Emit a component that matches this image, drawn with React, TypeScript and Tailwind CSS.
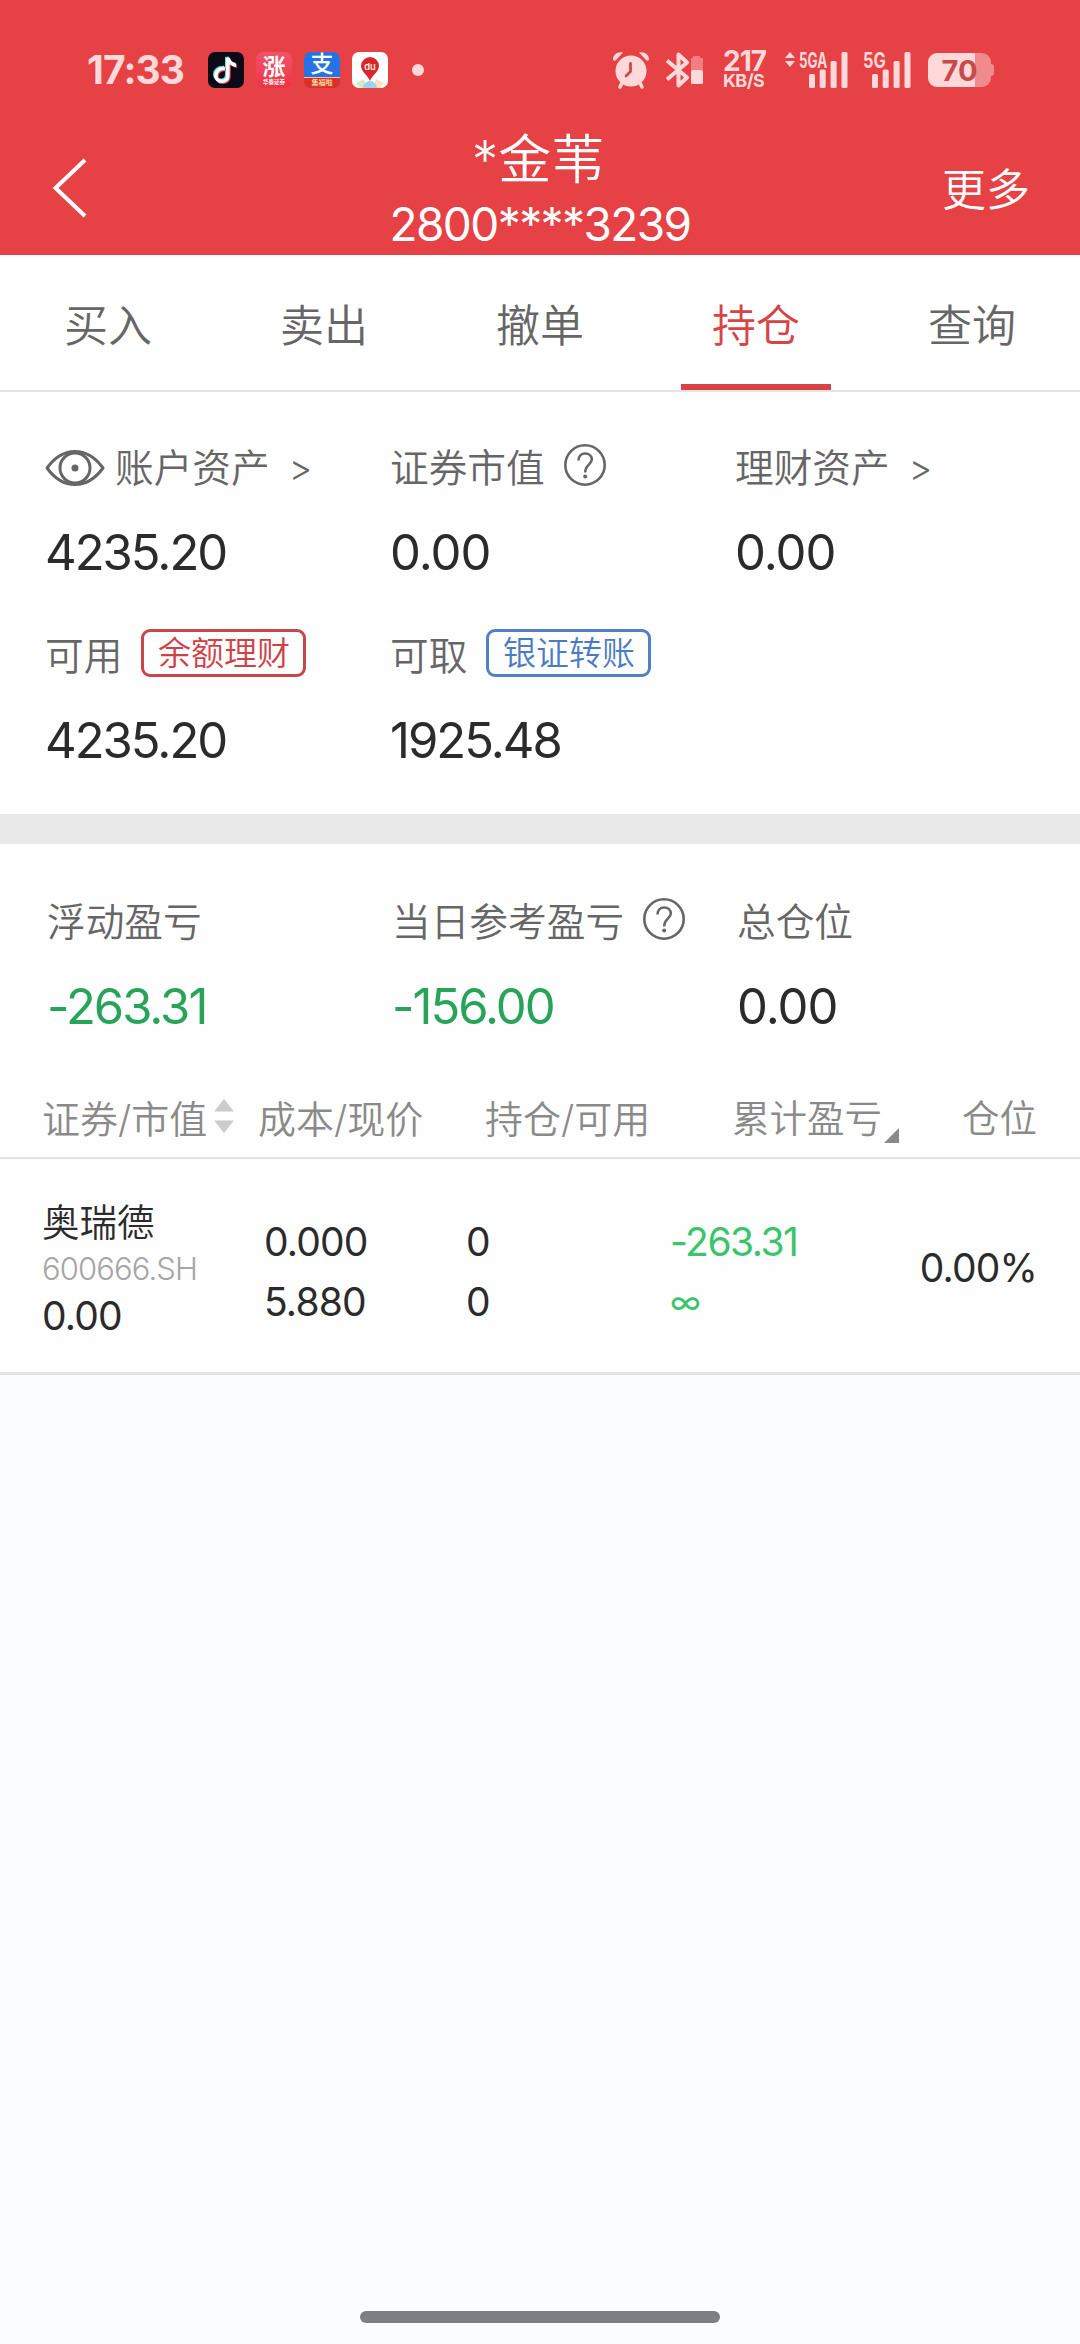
import React from "react";

interface Metric {
  label: string;
  value: string;
  tone?: "down";
  eye?: boolean;
  arrow?: boolean;
  help?: boolean;
  tag?: { text: string; color: "red" | "blue" };
}

const TABS = ["买入", "卖出", "撤单", "持仓", "查询"];
const ACTIVE_TAB = "持仓";

const ASSETS: Metric[] = [
  { label: "账户资产", value: "4235.20", eye: true, arrow: true },
  { label: "证券市值", value: "0.00", help: true },
  { label: "理财资产", value: "0.00", arrow: true },
];

const CASH: Metric[] = [
  { label: "可用", value: "4235.20", tag: { text: "余额理财", color: "red" } },
  { label: "可取", value: "1925.48", tag: { text: "银证转账", color: "blue" } },
];

const PROFIT: Metric[] = [
  { label: "浮动盈亏", value: "-263.31", tone: "down" },
  { label: "当日参考盈亏", value: "-156.00", tone: "down", help: true },
  { label: "总仓位", value: "0.00" },
];

const EyeIcon = () => (
  <svg className="mr-[10px] shrink-0" width="60" height="38" viewBox="0 0 60 38" fill="none" stroke="#666" strokeWidth="3">
    <path d="M2 19C10 8 19 2.500 30 2.500S50 8 58 19C50 30 41 35.500 30 35.500S10 30 2 19Z" strokeLinejoin="round" />
    <circle cx="30" cy="19" r="15" />
    <circle cx="30" cy="19" r="3.500" fill="#666" stroke="none" />
  </svg>
);

const HelpIcon = () => (
  <svg className="relative -top-[3px] ml-[19px] shrink-0" width="42" height="42" viewBox="0 0 42 42" fill="none" stroke="#666" strokeWidth="2.600">
    <circle cx="21" cy="21" r="19.700" />
    <path d="M14.500 16.500C14.500 12 17.300 9.500 21.200 9.500C25 9.500 27.800 12 27.800 15.500C27.800 20.500 21.200 20.500 21.200 28.500" />
    <circle cx="21.200" cy="32.500" r="2" fill="#666" stroke="none" />
  </svg>
);

const Bars = () => (
  <svg width="39" height="36" viewBox="0 0 39 36" fill="#ffd9d9">
    <rect x="0" y="22" width="6" height="14" rx="1.500" />
    <rect x="10.700" y="17.500" width="6" height="18.500" rx="1.500" />
    <rect x="21.600" y="9" width="6" height="27" rx="1.500" />
    <rect x="32.500" y="0" width="6" height="36" rx="1.500" />
  </svg>
);

const StatusBar = () => (
  <div className="flex h-[140px] items-center pl-[87px] text-[#ffd9d9]">
    <span className="w-[121px] pb-[2px] text-[39px] leading-none font-bold tracking-[-0.9px]">17:33</span>
    <div className="flex gap-3">
      <svg width="36" height="36" viewBox="0 0 36 36">
        <rect width="36" height="36" rx="7" fill="#0d0a18" />
        <g fill="none" strokeWidth="3.600">
          <path d="M16 15.500C10 15 6.800 18.500 6.800 22.300C6.800 25.800 9.500 28.300 13 28.300C16.500 28.300 18.800 25.800 18.800 22.800V5C20.300 9.500 22.500 11.700 27 12.200" stroke="#4fe3e0" />
          <path d="M18 17.500C12 17 8.800 20.500 8.800 24.300C8.800 27.800 11.500 30.300 15 30.300C18.500 30.300 20.800 27.800 20.800 24.800V7C22.300 11.500 24.500 13.700 29 14.200" stroke="#f0446a" />
          <path d="M17 16.500C11 16 7.800 19.500 7.800 23.300C7.800 26.800 10.500 29.300 14 29.300C17.500 29.300 19.800 26.800 19.800 23.800V6C21.300 10.500 23.500 12.700 28 13.200" stroke="#fff" />
        </g>
      </svg>
      <div className="flex h-9 w-9 flex-col items-center rounded-[7px] bg-linear-to-b from-[#f2526a] to-[#ee3146] text-white">
        <span className="mt-[3px] h-6 text-[23px] leading-[24px] font-bold">涨</span>
        <span className="text-[5.500px] leading-[7px] font-bold">华泰证券</span>
      </div>
      <div className="h-9 w-9 rounded-[7px] bg-[#2673e8] text-center text-white">
        <div className="h-[25px] text-[23px] leading-[25px] font-medium">支</div>
        <div className="h-[11px] w-full rounded-b-[7px] border-t border-[#f6c890] bg-[#dd2f24] text-[7px] leading-[10px] font-bold text-[#ffd9a0]">集福啦</div>
      </div>
      <svg width="36" height="36" viewBox="0 0 36 36">
        <rect width="36" height="36" rx="7" fill="#fff" />
        <path d="M4 31L12 27L15 36H8Z" fill="#d5e8c8" />
        <path d="M32 31L24 27L21 36H28Z" fill="#f4e6b8" />
        <path d="M11 36C12 31 15 29 18 29S24 31 25 36Z" fill="#9bd3ee" />
        <path d="M18 29C16 23 9 20 9 14A9 9 0 0 1 27 14C27 20 20 23 18 29Z" fill="#d8262c" />
        <text x="18" y="17.500" textAnchor="middle" fontSize="9.500" fontWeight="500" fill="#fff">du</text>
      </svg>
    </div>
    <span className="ml-6 h-3 w-3 rounded-full bg-[#ffd9d9]" />
    <svg className="ml-[188px]" width="38" height="38" viewBox="0 0 38 38">
      <path d="M10 32L8 36M28 32L30 36" stroke="#ffd9d9" strokeWidth="3.500" strokeLinecap="round" />
      <circle cx="19" cy="20" r="15.500" fill="#ffd9d9" />
      <path d="M1 8.500C1 4 5 .5 11 1.500L3.500 9.500C2.500 10 1 9.500 1 8.500ZM37 8.500C37 4 33 .5 27 1.500L34.500 9.500C35.500 10 37 9.500 37 8.500Z" fill="#ffd9d9" />
      <path d="M18.500 12.500V20.500L14 25" fill="none" stroke="#c9484b" strokeWidth="2.800" strokeLinecap="round" />
    </svg>
    <svg className="ml-4" width="38" height="38" viewBox="0 0 38 38">
      <path d="M1 9.500L21 26.500L12.500 34.500V3.500L21 11.500L1 28.500" fill="none" stroke="#ffd9d9" strokeWidth="4" strokeLinejoin="round" />
      <path d="M27 5H34V7H37V19H25V7H27Z" fill="#f17f80" />
      <rect x="25" y="19" width="12" height="14" rx="1.500" fill="#ffd9d9" />
    </svg>
    <div className="ml-[19px] flex w-[47px] flex-col font-bold">
      <span className="text-[28px] leading-[21px] tracking-[-1px]">217</span>
      <span className="text-[18px] leading-[17px] tracking-[-0.6px]">KB/S</span>
    </div>
    <div className="relative ml-[15px] flex h-9 w-[63px] justify-end">
      <svg className="absolute top-0 left-0" width="10" height="15" viewBox="0 0 10 15" fill="#ffd9d9">
        <path d="M5 0L10 6H0ZM5 15L0 9H10Z" />
      </svg>
      <span className="absolute top-0 left-[14px] origin-left scale-x-[0.64] text-[21px] leading-[17px] font-bold">5GA</span>
      <Bars />
    </div>
    <div className="relative ml-[15px] flex h-9 w-[48px] justify-end">
      <span className="absolute top-0 left-0 origin-left scale-x-[0.78] text-[21px] leading-[17px] font-bold">5G</span>
      <Bars />
    </div>
    <div className="ml-[17px] flex items-center">
      <div className="flex h-[34px] w-[63px] items-center justify-center rounded-[9px] bg-linear-to-r from-[#ffd9d9] from-75% to-[#f18a8b] to-75%">
        <span className="text-[29px] leading-none font-bold text-[#c9484b]">70</span>
      </div>
      <span className="h-3 w-[3px] rounded-r-sm bg-[#f18a8b]" />
    </div>
  </div>
);

const Header = () => (
  <header className="h-[255px] bg-[#e64144] text-white">
    <StatusBar />
    <div className="-mt-2 grid h-[123px] grid-cols-[200px_1fr_200px]">
      <svg className="mt-[26px] ml-[51px]" width="38" height="60" viewBox="0 0 38 60" fill="none" stroke="#fff" strokeWidth="4">
        <path d="M34 2L4.500 30L34 58" />
      </svg>
      <div className="flex flex-col items-center">
        <span className="h-[60px] pr-1 text-[53px] leading-[57px]">*金苇</span>
        <span className="text-[46px] leading-[64px] font-normal tracking-[-1.6px]">2800****3239</span>
      </div>
      <span className="pt-[25px] pr-[50px] text-right text-[44px] leading-[66px]">更多</span>
    </div>
  </header>
);

const Tabs = () => (
  <nav className="grid h-[137px] grid-cols-5 border-b-2 border-[#e3e3e3] bg-white">
    {TABS.map(tab => (
      <div
        key={tab}
        className={`flex flex-col items-center justify-between pt-[38px] text-[44px] leading-[66px] ${
          tab === ACTIVE_TAB ? "text-[#d84446]" : "text-[#666]"
        }`}
      >
        {tab}
        {tab === ACTIVE_TAB && <span className="h-[6px] w-[150px] bg-[#d84446]" />}
      </div>
    ))}
  </nav>
);

const MetricRow = ({ items }: { items: Metric[] }) => (
  <div className="grid grid-cols-[345px_345px_1fr]">
    {items.map(m => (
      <div key={m.label}>
        <div className="flex h-[58px] items-center text-[38.700px] whitespace-nowrap text-[#666]">
          {m.eye && <EyeIcon />}
          {m.label}
          {m.arrow && <span className="ml-[19px] text-[36px]">&gt;</span>}
          {m.help && <HelpIcon />}
          {m.tag && (
            <span
              className={`relative -top-[3px] ml-[19px] flex h-12 w-[165px] items-center justify-center rounded-[9px] border-3 pt-[2px] text-[33px] ${
                m.tag.color === "red" ? "border-[#c4484c] text-[#cf4146]" : "border-[#5180c4] text-[#4a7cc6]"
              }`}
            >
              {m.tag.text}
            </span>
          )}
        </div>
        <div
          className={`mt-[26px] text-[49px] leading-[60px] font-normal ${
            m.value.length > 4 ? "tracking-[-2px]" : "tracking-[-1px]"
          } ${m.tone === "down" ? "text-[#27a35a]" : "text-[#2b2b2b]"}`}
        >
          {m.value}
        </div>
      </div>
    ))}
  </div>
);

const Holdings = () => (
  <section>
    <div className="flex h-[78px] items-center border-b-2 border-[#e3e3e3] pl-[42px] text-[38px] whitespace-nowrap text-[#8a8a8a]">
      <div className="flex w-[216px] items-center">
        证券/市值
        <svg className="relative -top-[3px] ml-[7px]" width="20" height="34" viewBox="0 0 20 34" fill="#ccc">
          <path d="M10 0L20 12.500H0ZM10 34L0 21.500H20Z" />
        </svg>
      </div>
      <div className="w-[227px]">成本/现价</div>
      <div className="w-[247px]">持仓/可用</div>
      <div className="flex w-[230px] items-center text-[37.500px]">
        累计盈亏
        <svg className="mt-8 ml-[2px]" width="15" height="15" viewBox="0 0 15 15" fill="#8a8a8a">
          <path d="M15 0V15H0Z" />
        </svg>
      </div>
      <div className="text-[37.500px]">仓位</div>
    </div>
    <div className="flex h-[216px] items-center border-b-3 border-[#e3e3e3] pt-[4px] pr-[43px] pl-[42px] text-[39px] leading-[60px] font-normal tracking-[-0.8px] text-[#2b2b2b]">
      <div className="w-[222px] pt-[4px]">
        <div className="text-[37.500px] leading-[46px] font-[350] tracking-normal">奥瑞德</div>
        <div className="text-[31px] leading-[46px] font-[350] tracking-[-0.9px] text-[#a6a6a6]">600666.SH</div>
        <div className="leading-[48px]">0.00</div>
      </div>
      <div className="w-[202px] pt-2">
        <div>0.000</div>
        <div>5.880</div>
      </div>
      <div className="w-[204px] pt-2">
        <div>0</div>
        <div>0</div>
      </div>
      <div className="pt-2 text-[#3cc46c]">
        <div className="tracking-[-1.5px]">-263.31</div>
        <div className="text-[33px]">∞</div>
      </div>
      <div className="ml-auto">0.00%</div>
    </div>
  </section>
);

const App: React.FC = () => (
  <div className="flex h-[2344px] w-[1080px] flex-col overflow-hidden bg-[#fbfcff] font-['Inter','Noto_Sans_CJK_SC',sans-serif] font-[350]">
    <Header />
    <Tabs />
    <main className="bg-[#fefefe]">
      <div className="h-[422px] pt-[47px] pl-[45px]">
        <MetricRow items={ASSETS} />
        <div className="h-[44px]" />
        <MetricRow items={CASH} />
      </div>
      <div className="h-[30px] bg-[#e8e8e8]" />
      <div className="h-[237px] pt-[49px] pl-[47px]">
        <MetricRow items={PROFIT} />
      </div>
      <Holdings />
    </main>
    <div className="mx-auto mt-auto mb-[21px] h-3 w-[360px] rounded-full bg-[#7d7f80]" />
  </div>
);

export default App;
